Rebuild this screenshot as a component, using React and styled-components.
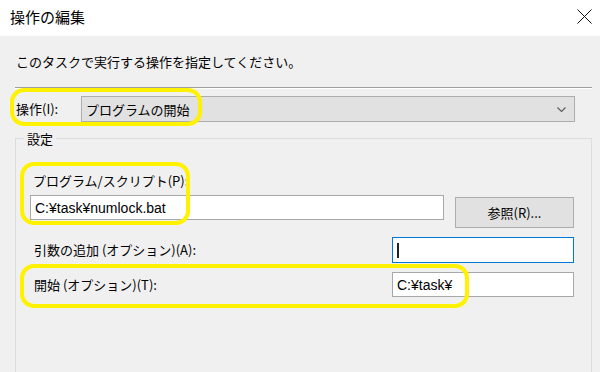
import React from "react";
import styled, { createGlobalStyle } from "styled-components";

const Global = createGlobalStyle`
  html, body { margin: 0; padding: 0; background: #f0f0f0; }
  body { font-family: "Noto Sans CJK JP", "Noto Sans", sans-serif; color: #000; }
`;

export default function App() {
  return (
    <Window>
      <Global />
      <TitleBar>
        <Title>操作の編集</Title>
        <CloseIcon viewBox="0 0 15 15">
          <path d="M0.5 0.5 L14.5 14.5 M14.5 0.5 L0.5 14.5" />
        </CloseIcon>
      </TitleBar>
      <Body>
        <Description>このタスクで実行する操作を指定してください。</Description>
        <Separator />
        <ActionRow>
          <ActionLabel>操作(I):</ActionLabel>
          <Dropdown>
            <span>プログラムの開始</span>
            <Chevron viewBox="0 0 9 5">
              <path d="M0.5 0.5 L4.5 4.5 L8.5 0.5" />
            </Chevron>
          </Dropdown>
        </ActionRow>
        <GroupBox>
          <Legend>設定</Legend>
          <FieldLabel>プログラム/スクリプト(P):</FieldLabel>
          <ProgramRow>
            <TextBox $width="414px">C:¥task¥numlock.bat</TextBox>
            <Button>参照(R)...</Button>
          </ProgramRow>
          <OptionRow $top="9px">
            <FieldLabel>引数の追加 (オプション)(A):</FieldLabel>
            <TextBox $width="182px" $focused>
              <Caret />
            </TextBox>
          </OptionRow>
          <OptionRow $top="9px">
            <FieldLabel>開始 (オプション)(T):</FieldLabel>
            <TextBox $width="182px">C:¥task¥</TextBox>
          </OptionRow>
        </GroupBox>
      </Body>
      <Highlight $left={10} $top={88} $w={192} $h={38} />
      <Highlight $left={20} $top={162} $w={170} $h={63} />
      <Highlight $left={20} $top={264} $w={449} $h={44} />
    </Window>
  );
}

const Window = styled.div`
  position: relative;
  width: 600px;
  height: 372px;
  overflow: hidden;
  background: #f0f0f0;
`;

const TitleBar = styled.div`
  height: 36px;
  background: #fff;
  display: flex;
  align-items: center;
  justify-content: space-between;
  padding: 0 8px 0 10px;
  box-sizing: border-box;
`;

const Title = styled.div`
  font-size: 15px;
  line-height: 20px;
  margin-top: -2px;
`;

const CloseIcon = styled.svg`
  width: 15px;
  height: 15px;
  margin-top: -4px;
  fill: none;
  stroke: #111;
  stroke-width: 1;
`;

const Body = styled.div`
  padding: 0 8px 0 15px;
`;

const Description = styled.div`
  font-size: 13px;
  line-height: 20px;
  padding: 16px 0 0 1px;
  height: 35px;
`;

const Separator = styled.div`
  border-top: 1px solid #a0a0a0;
  border-bottom: 1px solid #fff;
`;

const ActionRow = styled.div`
  display: flex;
  align-items: center;
  margin-top: 7px;
  padding-right: 17px;
`;

const ActionLabel = styled.div`
  width: 65px;
  font-size: 13px;
  line-height: 20px;
  padding-left: 1px;
`;

const Dropdown = styled.div`
  flex: 1;
  height: 26px;
  box-sizing: border-box;
  background: #e1e1e1;
  border: 1px solid #adadad;
  display: flex;
  align-items: center;
  justify-content: space-between;
  padding: 0 8px 0 4px;
  font-size: 13px;
`;

const Chevron = styled.svg`
  width: 9px;
  height: 5px;
  fill: none;
  stroke: #606060;
  stroke-width: 1.2;
`;

const GroupBox = styled.div`
  position: relative;
  margin-top: 16px;
  border: 1px solid #dcdcdc;
  height: 260px;
  padding: 32px 17px 0 15px;
  box-sizing: border-box;
`;

const Legend = styled.div`
  position: absolute;
  top: -10px;
  left: 8px;
  padding: 0 3px;
  background: #f0f0f0;
  font-size: 13px;
  line-height: 20px;
`;

const FieldLabel = styled.div`
  font-size: 13px;
  line-height: 20px;
  padding-left: 2px;
`;

const ProgramRow = styled.div`
  display: flex;
  align-items: flex-start;
  justify-content: space-between;
  margin-top: 4px;
`;

const OptionRow = styled.div`
  display: flex;
  align-items: center;
  justify-content: space-between;
  margin-top: ${(p) => p.$top};
  padding-left: 1px;
`;

const TextBox = styled.div`
  width: ${(p) => p.$width};
  height: ${(p) => (p.$focused ? "26px" : "25px")};
  box-sizing: border-box;
  background: #fff;
  border: 1px solid ${(p) => (p.$focused ? "#0078d7" : "#a8a8a8")};
  display: flex;
  align-items: center;
  padding-left: 4px;
  font-family: "Liberation Sans", "Noto Sans CJK JP", sans-serif;
  font-size: 14px;
  margin-left: -1px;
`;

const Caret = styled.span`
  display: block;
  width: 2px;
  height: 15px;
  background: #222;
`;

const Button = styled.div`
  width: 119px;
  height: 31px;
  margin-top: 2px;
  box-sizing: border-box;
  background: #e1e1e1;
  border: 1px solid #adadad;
  display: flex;
  align-items: center;
  justify-content: center;
  font-size: 13px;
`;

const Highlight = styled.div`
  position: absolute;
  left: ${(p) => p.$left}px;
  top: ${(p) => p.$top}px;
  width: ${(p) => p.$w}px;
  height: ${(p) => p.$h}px;
  box-sizing: border-box;
  border: 4px solid #fff200;
  border-radius: 14px;
  pointer-events: none;
`;
